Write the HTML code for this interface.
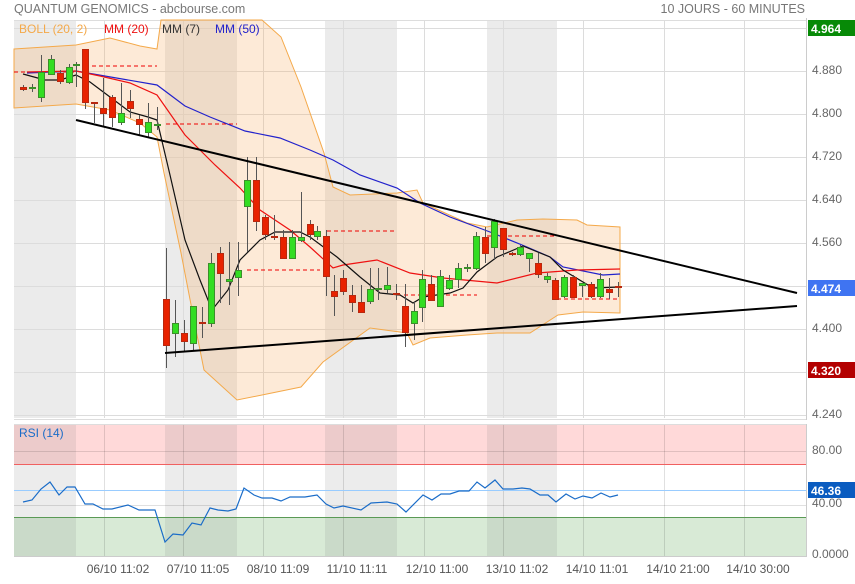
<!DOCTYPE html>
<html><head><meta charset="utf-8"><style>
body{margin:0;background:#fff;width:855px;height:579px;overflow:hidden;font-family:"Liberation Sans",sans-serif}
svg text{font-family:"Liberation Sans",sans-serif}
</style></head><body>
<svg width="855" height="579" xmlns="http://www.w3.org/2000/svg">
<rect width="855" height="579" fill="#fff"/>
<!-- main panel -->
<g>
<rect x="14" y="20" width="62" height="398" fill="#ebebeb"/>
<rect x="165" y="20" width="72" height="398" fill="#ebebeb"/>
<rect x="325" y="20" width="72" height="398" fill="#ebebeb"/>
<rect x="487" y="20" width="70" height="398" fill="#ebebeb"/>
<g stroke="#dcdcdc" stroke-width="1">
<line x1="14" y1="28.5" x2="806" y2="28.5"/><line x1="14" y1="71.5" x2="806" y2="71.5"/><line x1="14" y1="114.5" x2="806" y2="114.5"/><line x1="14" y1="157.5" x2="806" y2="157.5"/><line x1="14" y1="200.5" x2="806" y2="200.5"/><line x1="14" y1="243.5" x2="806" y2="243.5"/><line x1="14" y1="286.5" x2="806" y2="286.5"/><line x1="14" y1="329.5" x2="806" y2="329.5"/><line x1="14" y1="372.5" x2="806" y2="372.5"/><line x1="14" y1="415.5" x2="806" y2="415.5"/>
<line x1="104.5" y1="20" x2="104.5" y2="418"/><line x1="183.5" y1="20" x2="183.5" y2="418"/><line x1="263.5" y1="20" x2="263.5" y2="418"/><line x1="343.5" y1="20" x2="343.5" y2="418"/><line x1="424.5" y1="20" x2="424.5" y2="418"/><line x1="503.5" y1="20" x2="503.5" y2="418"/><line x1="583.5" y1="20" x2="583.5" y2="418"/><line x1="664.5" y1="20" x2="664.5" y2="418"/><line x1="744.5" y1="20" x2="744.5" y2="418"/>
</g>
<line x1="14" y1="20.5" x2="806" y2="20.5" stroke="#ddd"/>
<line x1="806.5" y1="18" x2="806.5" y2="420" stroke="#ccc"/>
<line x1="14" y1="419.5" x2="806" y2="419.5" stroke="#ddd"/>
<!-- bollinger -->
<path d="M14,49 L76,45 L110,38 L140,46 L157,49 L161,20 L262,20 L281,37 L301,87 L324,153 L333,187 L350,195 L397,193 L417,190 L423,203 L445,213 L467,223 L487,227 L517,220 L543,219 L577,220 L587,225 L620,227 L620,313 L583,312 L558,315 L530,333 L497,333 L467,335 L430,338 L413,345 L407,333 L370,328 L323,362 L301,387 L262,395 L237,400 L204,370 L194,320 L181,253 L164,173 L157,137 L140,123 L110,110 L76,104 L14,108 Z" fill="rgb(247,180,110)" fill-opacity="0.28" stroke="#f4a94a" stroke-width="1"/>
<!-- red dashes -->
<g stroke="#e00" stroke-width="1" stroke-dasharray="4,3">
<line x1="14" y1="72" x2="76" y2="72"/><line x1="85" y1="66" x2="157" y2="66"/><line x1="166" y1="124" x2="237" y2="124"/><line x1="247" y1="270" x2="320" y2="270"/><line x1="327" y1="231" x2="397" y2="231"/><line x1="397" y1="295" x2="477" y2="295"/><line x1="487" y1="236" x2="557" y2="236"/><line x1="557" y1="299" x2="620" y2="299"/>
</g>
<!-- MAs -->
<polyline fill="none" stroke="#2222cc" stroke-width="1.2" points="27,73 76,71 157,85 185,106 210,117 245,131 280,138 310,150 333,160 360,175 397,188 420,203 450,217 490,232 527,247 550,257 563,267 603,275 620,274"/>
<polyline fill="none" stroke="#ee1111" stroke-width="1.2" points="27,72 76,71 100,76 130,83 157,95 185,135 215,165 240,188 260,210 290,230 310,247 333,268 343,265 377,260 410,273 443,278 497,283 537,273 577,270 620,269"/>
<polyline fill="none" stroke="#111" stroke-width="1.2" points="23,74 45,80 60,80 76,75 90,82 110,97 130,112 148,117 157,120 170,175 185,240 200,280 212,310 228,290 240,260 260,240 275,232 300,232 310,237 337,257 360,277 380,293 400,295 413,303 423,297 450,293 463,288 477,272 497,257 523,246 550,257 563,270 593,288 620,287"/>
<!-- candles -->
<g stroke="#555" stroke-width="1">
<line x1="23.5" y1="85" x2="23.5" y2="91"/><line x1="32.5" y1="84" x2="32.5" y2="92"/><line x1="41.5" y1="55" x2="41.5" y2="102"/><line x1="51.5" y1="55" x2="51.5" y2="74"/><line x1="60.5" y1="70" x2="60.5" y2="84"/><line x1="69.5" y1="64" x2="69.5" y2="84"/><line x1="76.5" y1="62" x2="76.5" y2="87"/><line x1="85.5" y1="49" x2="85.5" y2="109"/><line x1="94.5" y1="103" x2="94.5" y2="123"/><line x1="103.5" y1="78" x2="103.5" y2="127"/><line x1="112.5" y1="95" x2="112.5" y2="127"/><line x1="121.5" y1="83" x2="121.5" y2="125"/><line x1="130.5" y1="90" x2="130.5" y2="118"/><line x1="139.5" y1="115" x2="139.5" y2="135"/><line x1="148.5" y1="103" x2="148.5" y2="137"/><line x1="157.5" y1="107" x2="157.5" y2="130"/>
<line x1="166.5" y1="248" x2="166.5" y2="368"/><line x1="175.5" y1="300" x2="175.5" y2="357"/><line x1="184.5" y1="320" x2="184.5" y2="352"/><line x1="193.5" y1="306" x2="193.5" y2="350"/><line x1="202.5" y1="307" x2="202.5" y2="338"/><line x1="211.5" y1="253" x2="211.5" y2="327"/><line x1="220.5" y1="247" x2="220.5" y2="303"/><line x1="229.5" y1="242" x2="229.5" y2="305"/><line x1="238.5" y1="242" x2="238.5" y2="296"/><line x1="247.5" y1="157" x2="247.5" y2="252"/><line x1="256.5" y1="157" x2="256.5" y2="231"/><line x1="265.5" y1="215" x2="265.5" y2="240"/><line x1="274.5" y1="215" x2="274.5" y2="240"/><line x1="283.5" y1="230" x2="283.5" y2="258"/><line x1="292.5" y1="230" x2="292.5" y2="258"/><line x1="301.5" y1="192" x2="301.5" y2="242"/><line x1="310.5" y1="220" x2="310.5" y2="240"/>
<line x1="317.5" y1="226" x2="317.5" y2="240"/><line x1="326.5" y1="230" x2="326.5" y2="296"/><line x1="334.5" y1="275" x2="334.5" y2="316"/><line x1="343.5" y1="270" x2="343.5" y2="295"/><line x1="352.5" y1="285" x2="352.5" y2="312"/><line x1="361.5" y1="285" x2="361.5" y2="312"/><line x1="370.5" y1="268" x2="370.5" y2="304"/><line x1="378.5" y1="268" x2="378.5" y2="300"/><line x1="387.5" y1="267" x2="387.5" y2="293"/><line x1="396.5" y1="284" x2="396.5" y2="300"/><line x1="405.5" y1="284" x2="405.5" y2="347"/><line x1="414.5" y1="302" x2="414.5" y2="340"/><line x1="422.5" y1="270" x2="422.5" y2="322"/><line x1="431.5" y1="275" x2="431.5" y2="300"/><line x1="440.5" y1="270" x2="440.5" y2="307"/><line x1="449.5" y1="275" x2="449.5" y2="290"/><line x1="458.5" y1="263" x2="458.5" y2="288"/><line x1="467.5" y1="264" x2="467.5" y2="272"/><line x1="476.5" y1="232" x2="476.5" y2="270"/><line x1="485.5" y1="227" x2="485.5" y2="263"/><line x1="494.5" y1="219" x2="494.5" y2="260"/><line x1="503.5" y1="228" x2="503.5" y2="257"/><line x1="512.5" y1="252" x2="512.5" y2="256"/><line x1="520.5" y1="245" x2="520.5" y2="256"/><line x1="529.5" y1="253" x2="529.5" y2="272"/><line x1="538.5" y1="253" x2="538.5" y2="278"/><line x1="547.5" y1="273" x2="547.5" y2="283"/><line x1="555.5" y1="278" x2="555.5" y2="300"/><line x1="564.5" y1="275" x2="564.5" y2="298"/><line x1="573.5" y1="275" x2="573.5" y2="298"/><line x1="582.5" y1="284" x2="582.5" y2="297"/><line x1="591.5" y1="282" x2="591.5" y2="298"/><line x1="600.5" y1="273" x2="600.5" y2="298"/><line x1="609.5" y1="278" x2="609.5" y2="299"/><line x1="618.5" y1="282" x2="618.5" y2="297"/>
</g>
<g stroke-width="1">
<g fill="#e82200" stroke="#b8280f">
<rect x="20.5" y="87.5" width="6" height="2"/><rect x="57.5" y="73.5" width="6" height="8"/><rect x="82.5" y="49.5" width="6" height="53"/><rect x="91.5" y="102.5" width="6" height="1"/><rect x="100.5" y="108.5" width="6" height="5"/><rect x="109.5" y="97.5" width="6" height="20"/><rect x="127.5" y="101.5" width="6" height="7"/><rect x="136.5" y="119.5" width="6" height="5"/>
<rect x="163.5" y="299.5" width="6" height="46"/><rect x="181.5" y="333.5" width="6" height="8"/><rect x="199.5" y="322.5" width="6" height="1"/><rect x="217.5" y="253.5" width="6" height="20"/><rect x="253.5" y="180.5" width="6" height="41"/><rect x="262.5" y="217.5" width="6" height="17"/><rect x="271.5" y="236.5" width="6" height="1"/><rect x="280.5" y="237.5" width="6" height="21"/><rect x="307.5" y="224.5" width="6" height="10"/>
<rect x="323.5" y="236.5" width="6" height="40"/><rect x="331.5" y="291.5" width="6" height="5"/><rect x="340.5" y="278.5" width="6" height="13"/><rect x="349.5" y="295.5" width="6" height="7"/><rect x="358.5" y="302.5" width="6" height="10"/><rect x="393.5" y="293.5" width="6" height="1"/><rect x="402.5" y="306.5" width="6" height="26"/><rect x="428.5" y="284.5" width="6" height="16"/><rect x="482.5" y="237.5" width="6" height="16"/><rect x="500.5" y="228.5" width="6" height="21"/><rect x="509.5" y="253.5" width="6" height="1"/><rect x="535.5" y="263.5" width="6" height="11"/><rect x="552.5" y="280.5" width="6" height="19"/><rect x="570.5" y="277.5" width="6" height="20"/><rect x="588.5" y="284.5" width="6" height="12"/><rect x="606.5" y="289.5" width="6" height="3"/><rect x="615.5" y="286.5" width="6" height="1"/>
</g>
<g fill="#33dd22" stroke="#3b8f2a">
<rect x="29.5" y="87.5" width="6" height="1"/><rect x="38.5" y="72.5" width="6" height="25"/><rect x="48.5" y="59.5" width="6" height="15"/><rect x="66.5" y="67.5" width="6" height="15"/><rect x="73.5" y="64.5" width="6" height="1"/><rect x="118.5" y="113.5" width="6" height="9"/><rect x="145.5" y="122.5" width="6" height="10"/><rect x="154.5" y="124.5" width="6" height="1"/>
<rect x="172.5" y="323.5" width="6" height="10"/><rect x="190.5" y="306.5" width="6" height="37"/><rect x="208.5" y="263.5" width="6" height="60"/><rect x="226.5" y="279.5" width="6" height="2"/><rect x="235.5" y="270.5" width="6" height="7"/><rect x="244.5" y="180.5" width="6" height="26"/><rect x="289.5" y="237.5" width="6" height="21"/><rect x="298.5" y="237.5" width="6" height="3"/>
<rect x="314.5" y="231.5" width="6" height="5"/><rect x="367.5" y="289.5" width="6" height="12"/><rect x="375.5" y="288.5" width="6" height="1"/><rect x="384.5" y="285.5" width="6" height="4"/><rect x="411.5" y="311.5" width="6" height="12"/><rect x="419.5" y="279.5" width="6" height="28"/><rect x="437.5" y="276.5" width="6" height="30"/><rect x="446.5" y="280.5" width="6" height="8"/><rect x="455.5" y="268.5" width="6" height="11"/><rect x="464.5" y="267.5" width="6" height="1"/><rect x="473.5" y="236.5" width="6" height="32"/><rect x="491.5" y="221.5" width="6" height="26"/><rect x="517.5" y="247.5" width="6" height="7"/><rect x="526.5" y="253.5" width="6" height="5"/><rect x="544.5" y="276.5" width="6" height="3"/><rect x="561.5" y="277.5" width="6" height="19"/><rect x="579.5" y="283.5" width="6" height="2"/><rect x="597.5" y="279.5" width="6" height="17"/>
</g>
</g>
<!-- trend lines -->
<line x1="76" y1="120" x2="797" y2="293" stroke="#000" stroke-width="2"/>
<line x1="165" y1="353" x2="797" y2="306" stroke="#000" stroke-width="2"/>
</g>
<!-- title/legend -->
<text x="14" y="13" font-size="12.5" fill="#777">QUANTUM GENOMICS - abcbourse.com</text>
<text x="805" y="13" font-size="12.5" fill="#777" text-anchor="end">10 JOURS - 60 MINUTES</text>
<text x="19" y="33" font-size="12" fill="#f4a94a">BOLL (20, 2)</text>
<text x="104" y="33" font-size="12" fill="#ee1111">MM (20)</text>
<text x="162" y="33" font-size="12" fill="#333">MM (7)</text>
<text x="215" y="33" font-size="12" fill="#2222cc">MM (50)</text>
<!-- right axis -->
<g font-size="12" fill="#666">
<text x="812" y="74">4.880</text><text x="812" y="117">4.800</text><text x="812" y="160">4.720</text><text x="812" y="203">4.640</text><text x="812" y="246">4.560</text><text x="812" y="289">4.480</text><text x="812" y="332">4.400</text><text x="812" y="418">4.240</text>
</g>
<rect x="808" y="20" width="47" height="16" fill="#078a07"/><text x="811" y="33" font-size="12" font-weight="bold" fill="#fff">4.964</text>
<rect x="808" y="280" width="47" height="16" fill="#3f74f2"/><text x="811" y="293" font-size="12" font-weight="bold" fill="#fff">4.474</text>
<rect x="808" y="362" width="47" height="16" fill="#b30000"/><text x="811" y="375" font-size="12" font-weight="bold" fill="#fff">4.320</text>
<!-- RSI panel -->
<rect x="14" y="424" width="792" height="40" fill="#ffd9d9"/>
<rect x="14" y="518" width="792" height="38" fill="#d8ead6"/>
<g fill="#808080" fill-opacity="0.15">
<rect x="14" y="424" width="62" height="132"/><rect x="165" y="424" width="72" height="132"/><rect x="325" y="424" width="72" height="132"/><rect x="487" y="424" width="70" height="132"/>
</g>
<g stroke="#000" stroke-opacity="0.12">
<line x1="14" y1="451.5" x2="806" y2="451.5"/><line x1="14" y1="505.5" x2="806" y2="505.5"/>
<line x1="104.5" y1="424" x2="104.5" y2="556"/><line x1="183.5" y1="424" x2="183.5" y2="556"/><line x1="263.5" y1="424" x2="263.5" y2="556"/><line x1="343.5" y1="424" x2="343.5" y2="556"/><line x1="424.5" y1="424" x2="424.5" y2="556"/><line x1="503.5" y1="424" x2="503.5" y2="556"/><line x1="583.5" y1="424" x2="583.5" y2="556"/><line x1="664.5" y1="424" x2="664.5" y2="556"/><line x1="744.5" y1="424" x2="744.5" y2="556"/>
</g>
<line x1="14" y1="424.5" x2="806" y2="424.5" stroke="#ddd"/>
<line x1="14" y1="556.5" x2="806" y2="556.5" stroke="#ccc"/>
<line x1="806.5" y1="424" x2="806.5" y2="557" stroke="#ccc"/>
<line x1="14" y1="464.5" x2="806" y2="464.5" stroke="#f06060"/>
<line x1="14" y1="517.5" x2="806" y2="517.5" stroke="#5a9a55"/>
<line x1="14" y1="490.5" x2="806" y2="490.5" stroke="#99ccff"/>
<polyline fill="none" stroke="#1a6cc8" stroke-width="1.2" points="23,502 32,500 41,489 50,482 59,495 67,487 75,487 85,504 93,504 103,509 112,509 128,505 139,510 155,510 165,542 173,534 183,535 192,523 201,525 210,508 218,510 228,511 236,509 244,488 254,495 262,498 272,498 281,501 290,497 305,497 317,495 326,504 334,508 343,506 361,510 371,503 387,502 397,504 406,512 423,495 432,500 441,494 450,494 459,491 469,491 477,482 485,488 495,480 503,489 513,489 522,488 530,489 540,495 548,495 556,502 566,494 575,499 583,496 592,498 601,493 610,497 618,495"/>
<text x="19" y="437" font-size="12" fill="#1a6cc8">RSI (14)</text>
<g font-size="12" fill="#666">
<text x="812" y="454">80.00</text><text x="812" y="507">40.00</text><text x="812" y="558">0.0000</text>
</g>
<rect x="808" y="482" width="47" height="16" fill="#0a5cc0"/><text x="811" y="495" font-size="12" font-weight="bold" fill="#fff">46.36</text>
<g font-size="12" fill="#555" text-anchor="middle">
<text x="118" y="573">06/10 11:02</text><text x="198" y="573">07/10 11:05</text><text x="278" y="573">08/10 11:09</text><text x="357" y="573">11/10 11:11</text><text x="437" y="573">12/10 11:00</text><text x="517" y="573">13/10 11:02</text><text x="597" y="573">14/10 11:01</text><text x="678" y="573">14/10 21:00</text><text x="758" y="573">14/10 30:00</text>
</g>
</svg>
</body></html>
